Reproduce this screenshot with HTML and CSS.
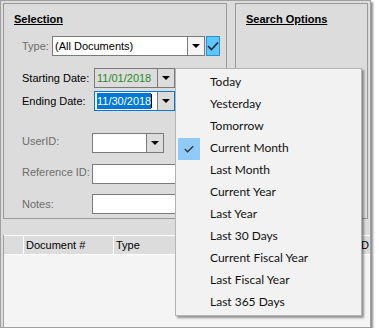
FILE: index.html
```html
<!DOCTYPE html>
<html lang="en">
<head>
    <meta charset="UTF-8">
    <title>Document Search</title>
    <link rel="stylesheet" href="styles.css">
</head>
<body>
    <div class="window">
        <div class="groups">
            <div class="group selection">
                <div class="group-title">Selection</div>

                <div class="row row-type">
                    <span class="label muted w-type">Type:</span>
                    <div class="combo combo-type">
                        <span class="combo-text">(All Documents)</span>
                        <span class="combo-btn light"><i class="arrow"></i></span>
                    </div>
                    <span class="check-btn">
                        <svg width="12" height="10" viewBox="0 0 12 10"><path d="M1 5 L4.5 8.5 L11 1.5" fill="none" stroke="#0d2236" stroke-width="1.6"/></svg>
                    </span>
                </div>

                <div class="row row-start">
                    <span class="label w-date">Starting Date:</span>
                    <div class="combo combo-date">
                        <span class="combo-text date-green">11/01/2018</span>
                        <span class="combo-btn"><i class="arrow"></i></span>
                    </div>
                </div>

                <div class="row row-end">
                    <span class="label w-date">Ending Date:</span>
                    <div class="combo combo-date focused">
                        <span class="combo-text"><span class="selected">11/30/2018</span><span class="caret"></span></span>
                        <span class="combo-btn"><i class="arrow"></i></span>
                    </div>
                </div>

                <div class="row row-user">
                    <span class="label muted w-field lift">UserID:</span>
                    <div class="combo combo-user">
                        <span class="combo-text white"></span>
                        <span class="combo-btn"><i class="arrow"></i></span>
                    </div>
                </div>

                <div class="row row-ref">
                    <span class="label muted w-field lift">Reference ID:</span>
                    <div class="textbox"></div>
                </div>

                <div class="row row-notes">
                    <span class="label muted w-field">Notes:</span>
                    <div class="textbox"></div>
                </div>
            </div>

            <div class="group search">
                <div class="group-title">Search Options</div>
            </div>
        </div>

        <div class="grid">
            <div class="grid-head">
                <div class="cell cell-row"></div>
                <div class="cell cell-doc">Document #</div>
                <div class="cell cell-type">Type</div>
                <div class="cell cell-date">D</div>
            </div>
        </div>

        <ul class="menu">
            <li>Today</li>
            <li>Yesterday</li>
            <li>Tomorrow</li>
            <li class="checked">
                <span class="menu-check">
                    <svg width="10" height="8" viewBox="0 0 10 8"><path d="M0.8 4 L3.6 6.8 L9.2 1.2" fill="none" stroke="#333" stroke-width="1.3"/></svg>
                </span>
                Current Month
            </li>
            <li>Last Month</li>
            <li>Current Year</li>
            <li>Last Year</li>
            <li>Last 30 Days</li>
            <li>Current Fiscal Year</li>
            <li>Last Fiscal Year</li>
            <li>Last 365 Days</li>
        </ul>
    </div>
</body>
</html>
```

FILE: styles.css
```css
body {
    margin: 0;
    background: #ffffff;
    font-family: "Liberation Sans", Arial, sans-serif;
    font-size: 11px;
    color: #000;
}

.window {
    position: relative;
    width: 369px;
    height: 326px;
    border: 1px solid #a0a0a0;
    background: #dcdcdc;
    box-shadow: 2px 2px 2px rgba(0, 0, 0, 0.45);
}

.groups {
    display: flex;
    gap: 8px;
    padding: 2px 2px 0 2px;
}

.group {
    height: 214px;
    border: 1px solid #999;
}

.selection {
    width: 222px;
}

.search {
    flex: 1;
}

.group-title {
    margin: 8px 0 0 10px;
    font-weight: bold;
    text-decoration: underline;
    line-height: 14px;
}

.row {
    display: flex;
    align-items: center;
    height: 20px;
    padding-left: 18px;
}

.row-type { margin-top: 10px; }
.row-start { margin-top: 12px; }
.row-end { margin-top: 3px; }
.row-user { margin-top: 22px; }
.row-ref { margin-top: 11px; }
.row-notes { margin-top: 10px; }

.label {
    flex-shrink: 0;
    white-space: nowrap;
}

.label.muted {
    color: #6d6d6d;
}

.label.lift {
    position: relative;
    top: -2px;
}

.w-type { width: 30px; }
.w-date { width: 72px; }
.w-field { width: 70px; }

.combo {
    display: flex;
    height: 20px;
    box-sizing: border-box;
    border: 1px solid #7a7a7a;
    background: #fff;
}

.combo-text {
    flex: 1;
    padding-left: 2px;
    line-height: 18px;
    white-space: nowrap;
    overflow: hidden;
}

.combo-btn {
    display: flex;
    align-items: center;
    justify-content: center;
    width: 16px;
    border-left: 1px solid #7a7a7a;
    background: #dcdcdc;
}

.combo-btn.light {
    background: #f4f4f4;
}

.arrow {
    width: 0;
    height: 0;
    border-left: 4px solid transparent;
    border-right: 4px solid transparent;
    border-top: 4px solid #000;
}

.combo-type {
    width: 153px;
}

.check-btn {
    display: flex;
    align-items: center;
    justify-content: center;
    width: 14px;
    height: 20px;
    box-sizing: border-box;
    margin-left: 1px;
    border: 1px solid #2d8fd0;
    background: #5ec6f8;
}

.combo-date {
    width: 81px;
    background: #dcdcdc;
}

.date-green {
    color: #2a8a2a;
}

.combo-date.focused {
    border-color: #0078d7;
    background: #dcdcdc;
}

.combo-date.focused .combo-text {
    display: flex;
    align-items: center;
    background: #fff;
}

.selected {
    background: #0078d7;
    color: #fff;
    line-height: 16px;
}

.caret {
    width: 1px;
    height: 14px;
    background: #000;
}

.combo-user {
    width: 72px;
}

.textbox {
    width: 127px;
    height: 20px;
    box-sizing: border-box;
    border: 1px solid #7a7a7a;
    background: #fff;
}

.grid {
    margin: 16px 0 0 2px;
    height: 92px;
    border-left: 1px solid #a0a0a0;
    background: #f4f4f4;
    overflow: hidden;
}

.grid-head {
    display: flex;
    height: 20px;
    box-sizing: border-box;
    border-top: 1px solid #fff;
    border-bottom: 1px solid #fff;
    background: #dcdcdc;
}

.cell {
    flex-shrink: 0;
    box-sizing: border-box;
    padding-left: 2px;
    line-height: 18px;
    border-right: 1px solid #fff;
    white-space: nowrap;
}

.cell-row { width: 20px; }
.cell-doc { width: 90px; }
.cell-type { width: 246px; }
.cell-date { padding-left: 1px; border-right: none; }

.menu {
    position: absolute;
    left: 174px;
    top: 67px;
    width: 187px;
    height: 248px;
    box-sizing: border-box;
    margin: 0;
    padding: 2px 0 0 0;
    list-style: none;
    border: 1px solid #b4b4b4;
    background: #f2f2f2;
    box-shadow: 2px 2px 2px rgba(0, 0, 0, 0.4);
    font-family: "Lato", "Liberation Sans", sans-serif;
    font-size: 12px;
    color: #111;
}

.menu li {
    position: relative;
    height: 22px;
    line-height: 22px;
    padding-left: 34px;
}

.menu-check {
    position: absolute;
    left: 2px;
    top: 1px;
    display: flex;
    align-items: center;
    justify-content: center;
    width: 22px;
    height: 22px;
    background: #91c9f7;
}
```
